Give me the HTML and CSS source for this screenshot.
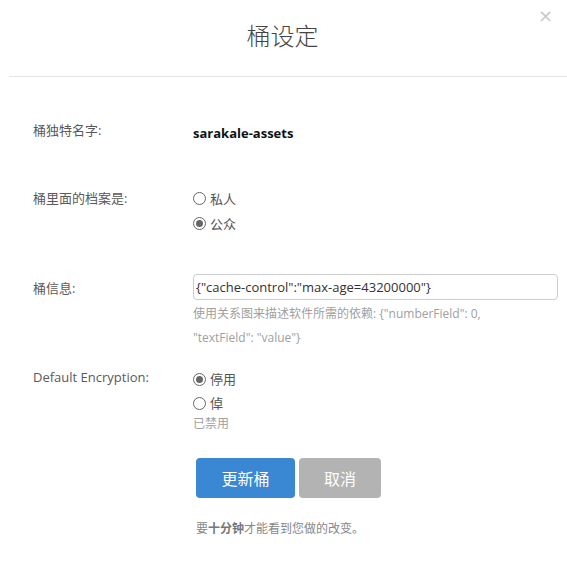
FILE: index.html
```html
<!DOCTYPE html>
<html lang="zh">
<head>
<meta charset="utf-8">
<title>桶设定</title>
<link rel="stylesheet" href="styles.css">
</head>
<body>
<div class="modal">
  <header class="modal-header">
    <h1 class="modal-title">桶设定</h1>
    <span class="close">&times;</span>
  </header>
  <div class="modal-body">
    <div class="row row-name">
      <div class="label">桶独特名字:</div>
      <div class="field"><strong class="bucket-name">sarakale-assets</strong></div>
    </div>
    <div class="row row-access">
      <div class="label">桶里面的档案是:</div>
      <div class="field">
        <label class="radio"><span class="dot"></span>私人</label>
        <label class="radio checked"><span class="dot"></span>公众</label>
      </div>
    </div>
    <div class="row row-info">
      <div class="label">桶信息:</div>
      <div class="field">
        <div class="input">{"cache-control":"max-age=43200000"}</div>
        <p class="help">使用关系图来描述软件所需的依赖: {"numberField": 0, "textField": "value"}</p>
      </div>
    </div>
    <div class="row row-enc">
      <div class="label">Default Encryption:</div>
      <div class="field">
        <label class="radio checked"><span class="dot"></span>停用</label>
        <label class="radio"><span class="dot"></span>倬</label>
        <div class="sub">已禁用</div>
      </div>
    </div>
    <div class="actions">
      <button class="btn btn-primary">更新桶</button>
      <button class="btn btn-cancel">取消</button>
    </div>
    <p class="note">要<b>十分钟</b>才能看到您做的改变。</p>
  </div>
</div>
</body>
</html>
```
FILE: styles.css
```css
html, body {
  margin: 0;
  padding: 0;
  background: #fff;
}
body {
  font-family: "Open Sans", "Noto Sans CJK SC", sans-serif;
  color: #5a5a5a;
  font-size: 13px;
}
.modal {
  width: 567px;
  height: 562px;
  position: relative;
}
.modal-header {
  margin-left: 9px;
  height: 76px;
  border-bottom: 1px solid #e5e5e5;
  display: flex;
  justify-content: center;
  align-items: flex-start;
}
.modal-title {
  margin: 19px 0 0 -11px;
  font-size: 24px;
  font-weight: 300;
  line-height: 34px;
  color: #444;
}
.close {
  position: absolute;
  right: 14px;
  top: 5px;
  font-size: 18px;
  color: #c8c8c8;
  font-family: "DejaVu Sans", sans-serif;
  line-height: 22px;
}
.modal-body {
  padding-left: 33px;
  display: flex;
  flex-direction: column;
}
.row {
  display: flex;
}
.label {
  width: 160px;
  flex: none;
  line-height: 20px;
}
.field {
  flex: 1;
  line-height: 20px;
}
.row-name {
  margin-top: 43px;
}
.bucket-name {
  display: block;
  margin-top: 3px;
  font-weight: 700;
  color: #111;
  font-size: 13px;
}
.row-access {
  margin-top: 45px;
}
.radio {
  display: flex;
  align-items: center;
  height: 25px;
  color: #555;
}
.row-access .radio:first-child {
  margin-top: -2px;
}
.dot {
  width: 11px;
  height: 11px;
  border: 1px solid #666;
  border-radius: 50%;
  margin-right: 4px;
  box-sizing: content-box;
  position: relative;
}
.radio.checked .dot::after {
  content: "";
  position: absolute;
  left: 2px;
  top: 2px;
  width: 7px;
  height: 7px;
  border-radius: 50%;
  background: #666;
}
.row-info {
  margin-top: 39px;
}
.row-info .label {
  margin-top: 3px;
}
.input {
  width: 365px;
  height: 26px;
  box-sizing: border-box;
  border: 1px solid #ccc;
  border-radius: 4px;
  padding: 0 2px;
  line-height: 24px;
  font-size: 13px;
  color: #333;
  margin-top: -1px;
}
.help {
  margin: 2px 0 0;
  width: 320px;
  font-size: 12px;
  line-height: 24px;
  color: #a0a0a0;
}
.row-enc {
  margin-top: 17px;
}
.row-enc .radio {
  height: 24px;
}
.row-enc .radio:first-child {
  margin-top: 0;
}
.sub {
  font-size: 12px;
  color: #a0a0a0;
  line-height: 16px;
  margin-top: 1px;
}
.actions {
  margin-top: 26px;
  margin-left: 163px;
  display: flex;
  gap: 4px;
}
.btn {
  border: none;
  border-radius: 4px;
  height: 40px;
  font-family: "Open Sans", "Noto Sans CJK SC", sans-serif;
  font-size: 16px;
  color: #fff;
  padding: 0;
}
.btn-primary {
  width: 99px;
  background: #3a87d3;
}
.btn-cancel {
  width: 82px;
  background: #b3b3b3;
}
.note {
  margin: 22px 0 0 163px;
  font-size: 12px;
  color: #888;
  line-height: 18px;
}
.note b {
  font-weight: 700;
  color: #777;
}
```
